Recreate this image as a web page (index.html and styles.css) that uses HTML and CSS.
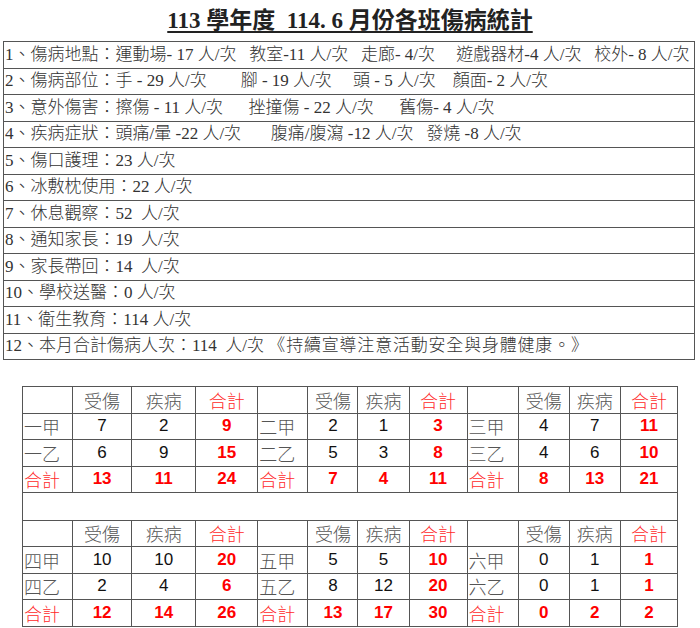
FILE: index.html
```html
<!DOCTYPE html>
<html lang="zh-Hant">
<head>
<meta charset="utf-8">
<title>113 學年度 114. 6 月份各班傷病統計</title>
<link rel="stylesheet" href="styles.css">
</head>
<body>
<div class="page">
  <h1 class="title"><span class="title-text">113 學年度&nbsp; 114. 6 月份各班傷病統計</span></h1>

  <table class="summary">
    <tr><td>1、傷病地點：運動場- 17 人/次   教室-11 人/次   走廊- 4/次     遊戲器材-4 人/次   校外- 8 人/次</td></tr>
    <tr><td>2、傷病部位：手 - 29 人/次        腳 - 19 人/次     頭 - 5 人/次    顏面- 2 人/次</td></tr>
    <tr><td>3、意外傷害：擦傷 - 11 人/次      挫撞傷 - 22 人/次      舊傷- 4 人/次</td></tr>
    <tr><td>4、疾病症狀：頭痛/暈 -22 人/次       腹痛/腹瀉 -12 人/次   發燒 -8 人/次</td></tr>
    <tr><td>5、傷口護理：23 人/次</td></tr>
    <tr><td>6、冰敷枕使用：22 人/次</td></tr>
    <tr><td>7、休息觀察：52  人/次</td></tr>
    <tr><td>8、通知家長：19  人/次</td></tr>
    <tr><td>9、家長帶回：14  人/次</td></tr>
    <tr><td>10、學校送醫：0 人/次</td></tr>
    <tr><td>11、衛生教育：114 人/次</td></tr>
    <tr><td>12、本月合計傷病人次：114  人/次 <span class="note">《持續宣導注意活動安全與身體健康。》</span></td></tr>
  </table>

  <table class="stats">
    <colgroup>
      <col class="c-label"><col class="c1"><col class="c2"><col class="c3">
      <col class="c-label2"><col class="c4"><col class="c5"><col class="c6">
      <col class="c-label3"><col class="c7"><col class="c8"><col class="c9">
    </colgroup>
    <tr class="head">
      <td></td><td>受傷</td><td>疾病</td><td class="red">合計</td>
      <td></td><td>受傷</td><td>疾病</td><td class="red">合計</td>
      <td></td><td>受傷</td><td>疾病</td><td class="red">合計</td>
    </tr>
    <tr>
      <td class="lbl">一甲</td><td class="n">7</td><td class="n">2</td><td class="n tot">9</td>
      <td class="lbl">二甲</td><td class="n">2</td><td class="n">1</td><td class="n tot">3</td>
      <td class="lbl">三甲</td><td class="n">4</td><td class="n">7</td><td class="n tot">11</td>
    </tr>
    <tr>
      <td class="lbl">一乙</td><td class="n">6</td><td class="n">9</td><td class="n tot">15</td>
      <td class="lbl">二乙</td><td class="n">5</td><td class="n">3</td><td class="n tot">8</td>
      <td class="lbl">三乙</td><td class="n">4</td><td class="n">6</td><td class="n tot">10</td>
    </tr>
    <tr>
      <td class="lbl red">合計</td><td class="n tot">13</td><td class="n tot">11</td><td class="n tot">24</td>
      <td class="lbl red">合計</td><td class="n tot">7</td><td class="n tot">4</td><td class="n tot">11</td>
      <td class="lbl red">合計</td><td class="n tot">8</td><td class="n tot">13</td><td class="n tot">21</td>
    </tr>
    <tr class="spacer"><td colspan="12"></td></tr>
    <tr class="head">
      <td></td><td>受傷</td><td>疾病</td><td class="red">合計</td>
      <td></td><td>受傷</td><td>疾病</td><td class="red">合計</td>
      <td></td><td>受傷</td><td>疾病</td><td class="red">合計</td>
    </tr>
    <tr>
      <td class="lbl">四甲</td><td class="n">10</td><td class="n">10</td><td class="n tot">20</td>
      <td class="lbl">五甲</td><td class="n">5</td><td class="n">5</td><td class="n tot">10</td>
      <td class="lbl">六甲</td><td class="n">0</td><td class="n">1</td><td class="n tot">1</td>
    </tr>
    <tr>
      <td class="lbl">四乙</td><td class="n">2</td><td class="n">4</td><td class="n tot">6</td>
      <td class="lbl">五乙</td><td class="n">8</td><td class="n">12</td><td class="n tot">20</td>
      <td class="lbl">六乙</td><td class="n">0</td><td class="n">1</td><td class="n tot">1</td>
    </tr>
    <tr>
      <td class="lbl red">合計</td><td class="n tot">12</td><td class="n tot">14</td><td class="n tot">26</td>
      <td class="lbl red">合計</td><td class="n tot">13</td><td class="n tot">17</td><td class="n tot">30</td>
      <td class="lbl red">合計</td><td class="n tot">0</td><td class="n tot">2</td><td class="n tot">2</td>
    </tr>
  </table>
</div>
</body>
</html>
```

FILE: styles.css
```css
html, body {
  margin: 0;
  padding: 0;
  background: #ffffff;
}

.page {
  width: 700px;
  font-family: "Liberation Serif", "Noto Sans CJK TC", serif;
  color: #333333;
}

.title {
  margin: 0;
  height: 41px;
  padding-top: 8px;
  box-sizing: border-box;
  text-align: center;
  font-family: "Liberation Serif", "Noto Sans CJK TC", serif;
  font-size: 23px;
  line-height: 26px;
  font-weight: bold;
  color: #222222;
}

.title-text {
  text-decoration: underline;
  text-decoration-thickness: 2px;
  text-underline-offset: 3px;
}

.summary {
  margin-left: 3px;
  width: 692px;
  border-collapse: collapse;
  font-size: 17px;
  font-weight: 300;
}

.summary td {
  border: 1px solid #555555;
  height: 25.5px;
  padding: 0 0 0 1px;
  white-space: pre;
  line-height: 20px;
  vertical-align: middle;
}

.note {
  letter-spacing: 0.8px;
}

.stats {
  margin: 26px 0 0 22px;
  width: 656px;
  border-collapse: collapse;
  table-layout: fixed;
}

.stats td {
  border: 1px solid #555555;
  height: 25.5px;
  padding: 0;
  text-align: center;
  vertical-align: middle;
  line-height: 20px;
}

.c-label { width: 50px; }
.c1 { width: 59px; }
.c2 { width: 64px; }
.c3 { width: 62px; }
.c-label2 { width: 50px; }
.c4 { width: 50px; }
.c5 { width: 51px; }
.c6 { width: 58px; }
.c-label3 { width: 51px; }
.c7 { width: 51px; }
.c8 { width: 51px; }
.c9 { width: 57px; }

.stats .head td {
  font-family: "Noto Sans CJK TC", sans-serif;
  font-weight: 300;
  font-size: 18px;
  color: #555555;
}

.stats td.lbl {
  text-align: left;
  padding-left: 1px;
  font-family: "Noto Sans CJK TC", sans-serif;
  font-weight: 300;
  font-size: 18px;
  color: #555555;
}

.stats td.n {
  font-family: "Liberation Sans", Arial, sans-serif;
  font-size: 17px;
  color: #111111;
}

.stats td.tot {
  font-weight: bold;
  color: #ff0000;
}

.stats .head td.red,
.stats td.lbl.red {
  color: #ff2a2a;
}

.stats .spacer td {
  height: 26.5px;
}
```
